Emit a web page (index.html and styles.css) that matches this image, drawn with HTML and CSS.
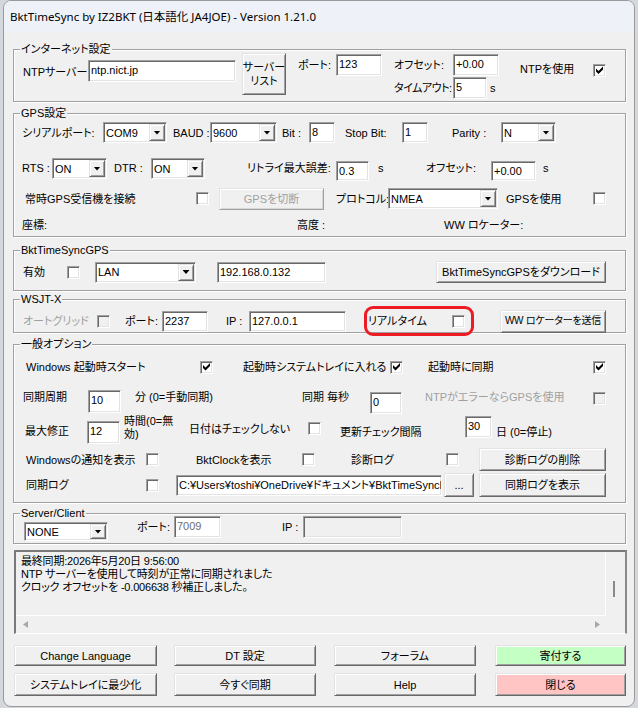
FILE: index.html
```html
<!DOCTYPE html>
<html lang="ja">
<head>
<meta charset="UTF-8">
<title>BktTimeSync</title>
<link rel="stylesheet" href="styles.css">
</head>
<body>
<div class="win">
	<div class="caption">BktTimeSync by IZ2BKT (日本語化 JA4JOE) - Version 1.21.0</div>
	<div class="client">

		<fieldset class="grp g-inet">
			<legend>インターネット設定</legend>
			<div class="inet">
				<span class="lbl ntp-lbl">NTPサーバー</span>
				<div class="tb ntp-tb">ntp.nict.jp</div>
				<div class="btn list-btn"><span>サーバー<br>リスト</span></div>
				<span class="lbl port-lbl">ポート:</span>
				<div class="tb port-tb">123</div>
				<div class="inet-col">
					<div class="inet-line"><span class="lbl off-lbl">オフセット:</span><div class="tb off-tb">+0.00</div></div>
					<div class="inet-line"><span class="lbl off-lbl tight">タイムアウト:</span><div class="tb to-tb">5</div><span class="lbl unit">s</span></div>
				</div>
				<span class="lbl use-lbl">NTPを使用</span>
				<span class="cb on use-cb"></span>
			</div>
		</fieldset>

		<fieldset class="grp g-gps">
			<legend>GPS設定</legend>
			<div class="row gps1">
				<span class="lbl">シリアルポート:</span>
				<div class="cmb w64"><span>COM9</span><i class="dd"></i></div>
				<span class="lbl">BAUD :</span>
				<div class="cmb w67"><span>9600</span><i class="dd"></i></div>
				<span class="lbl">Bit :</span>
				<div class="tb w26">8</div>
				<span class="lbl">Stop Bit:</span>
				<div class="tb w26">1</div>
				<span class="lbl">Parity :</span>
				<div class="cmb w55"><span>N</span><i class="dd"></i></div>
			</div>
			<div class="row gps2">
				<span class="lbl">RTS :</span>
				<div class="cmb w55"><span>ON</span><i class="dd"></i></div>
				<span class="lbl">DTR :</span>
				<div class="cmb w54"><span>ON</span><i class="dd"></i></div>
				<span class="lbl">リトライ最大誤差:</span>
				<div class="tb w33">0.3</div>
				<span class="lbl">s</span>
				<span class="lbl">オフセット:</span>
				<div class="tb w45">+0.00</div>
				<span class="lbl">s</span>
			</div>
			<div class="row gps3">
				<span class="lbl">常時GPS受信機を接続</span>
				<span class="cb"></span>
				<div class="btn dis w105">GPSを切断</div>
				<span class="lbl">プロトコル:</span>
				<div class="cmb w110"><span>NMEA</span><i class="dd"></i></div>
				<span class="lbl">GPSを使用</span>
				<span class="cb"></span>
			</div>
			<div class="row gps4">
				<span class="lbl">座標:</span>
				<span class="lbl">高度 :</span>
				<span class="lbl">WW ロケーター:</span>
			</div>
		</fieldset>

		<fieldset class="grp g-bkt">
			<legend>BktTimeSyncGPS</legend>
			<div class="row bkt">
				<span class="lbl">有効</span>
				<span class="cb"></span>
				<div class="cmb w101"><span>LAN</span><i class="dd"></i></div>
				<div class="tb w109">192.168.0.132</div>
				<div class="btn w170">BktTimeSyncGPSをダウンロード</div>
			</div>
		</fieldset>

		<fieldset class="grp g-wsjt">
			<legend>WSJT-X</legend>
			<div class="row wsjt">
				<span class="lbl dis">オートグリッド</span>
				<span class="cb dis"></span>
				<span class="lbl">ポート:</span>
				<div class="tb w46">2237</div>
				<span class="lbl">IP :</span>
				<div class="tb w97">127.0.0.1</div>
				<div class="rt">
					<span class="lbl">リアルタイム</span>
					<span class="cb"></span>
				</div>
				<div class="btn w106 small">WW ロケーターを送信</div>
			</div>
		</fieldset>

		<fieldset class="grp g-opt">
			<legend>一般オプション</legend>
			<div class="row opt1">
				<span class="lbl">Windows 起動時スタート</span>
				<span class="cb on"></span>
				<span class="lbl">起動時システムトレイに入れる</span>
				<span class="cb on"></span>
				<span class="lbl">起動時に同期</span>
				<span class="cb on"></span>
			</div>
			<div class="row opt2">
				<span class="lbl">同期周期</span>
				<div class="tb w33">10</div>
				<span class="lbl">分 (0=手動同期)</span>
				<span class="lbl">同期 毎秒</span>
				<div class="tb w32">0</div>
				<span class="lbl dis">NTPがエラーならGPSを使用</span>
				<span class="cb dis"></span>
			</div>
			<div class="row opt3">
				<span class="lbl o3-max">最大修正</span>
				<div class="tb w33 o3-h">12</div>
				<span class="lbl o3-hour">時間(0=無<br>効)</span>
				<span class="lbl o3-date">日付はチェックしない</span>
				<span class="cb o3-cb"></span>
				<span class="lbl o3-upd">更新チェック間隔</span>
				<div class="tb w27 o3-day">30</div>
				<span class="lbl o3-upd">日 (0=停止)</span>
			</div>
			<div class="row opt4">
				<span class="lbl">Windowsの通知を表示</span>
				<span class="cb"></span>
				<span class="lbl">BktClockを表示</span>
				<span class="cb"></span>
				<span class="lbl">診断ログ</span>
				<span class="cb"></span>
				<div class="btn w127">診断ログの削除</div>
			</div>
			<div class="row opt5">
				<span class="lbl">同期ログ</span>
				<span class="cb"></span>
				<div class="tb w266">C:¥Users¥toshi¥OneDrive¥ドキュメント¥BktTimeSyncL</div>
				<div class="btn w30">...</div>
				<div class="btn w127">同期ログを表示</div>
			</div>
		</fieldset>

		<fieldset class="grp g-srv">
			<legend>Server/Client</legend>
			<div class="row srv">
				<div class="cmb w84"><span>NONE</span><i class="dd"></i></div>
				<span class="lbl">ポート:</span>
				<div class="tb w47 gray">7009</div>
				<span class="lbl">IP :</span>
				<div class="tb w99 ro"></div>
			</div>
		</fieldset>

		<div class="log">
			<div class="log-text">最終同期:2026年5月20日 9:56:00<br>NTP サーバーを使用して時刻が正常に同期されました<br>クロック オフセットを -0.006638 秒補正しました。</div>
			<div class="vbar"><i></i></div>
			<div class="hbar"><i class="al"></i><i class="ar"></i></div>
		</div>

		<div class="foot">
			<div class="btn c1">Change Language</div>
			<div class="btn">DT 設定</div>
			<div class="btn">フォーラム</div>
			<div class="btn c4 green">寄付する</div>
			<div class="btn c1">システムトレイに最少化</div>
			<div class="btn">今すぐ同期</div>
			<div class="btn">Help</div>
			<div class="btn c4 red">閉じる</div>
		</div>

	</div>
</div>
</body>
</html>
```

FILE: styles.css
```css
*{margin:0;padding:0;box-sizing:border-box;}
body{background:#d4d7dc;font-family:"Liberation Sans","Noto Sans CJK JP",sans-serif;font-size:11px;line-height:14px;color:#000;font-feature-settings:"palt";}

/* window frame */
.win{width:632px;height:707px;margin-left:3px;background:#f0f0f0;border:1px solid #9a9a9a;border-radius:8px;overflow:hidden;}
.caption{height:31px;line-height:31px;padding-left:6px;background:#eef2f8;font-family:"Noto Sans","Noto Sans CJK JP",sans-serif;font-size:11.5px;font-feature-settings:normal;}
.client{padding:10px 8px 0 9px;}

/* group boxes */
.grp{border:1px solid #a0a0a0;box-shadow:inset 1px 1px #fff,1px 1px #fff;min-width:0;}
.grp legend{margin-left:6px;padding:0 1px;background:#f0f0f0;line-height:14px;}
.g-inet{height:60px;}
.g-gps{height:131px;margin-top:4px;}
.g-bkt{height:48px;margin-top:6px;}
.g-wsjt{height:41px;margin-top:1px;}
.g-opt{height:166px;margin-top:4px;}
.g-srv{height:38px;margin-top:3px;}

/* controls */
.lbl{white-space:nowrap;}
.tight{letter-spacing:-0.5px;}
.small{font-size:10px;letter-spacing:-0.2px;}
.dis{color:#a0a0a0;}
.tb{height:21px;background:#fff;border:1px solid;border-color:#a0a0a0 #fff #fff #a0a0a0;box-shadow:inset 1px 1px #696969,inset -1px -1px #e3e3e3;padding:2px 0 0 2px;white-space:nowrap;overflow:hidden;}
.tb.gray{color:#6d6d6d;}
.tb.ro{background:#f0f0f0;}
.cmb{height:21px;display:flex;align-items:center;justify-content:space-between;background:#fff;border:1px solid;border-color:#a0a0a0 #fff #fff #a0a0a0;box-shadow:inset 1px 1px #696969,inset -1px -1px #e3e3e3;padding:1px 1px 1px 2px;white-space:nowrap;}
.dd{align-self:stretch;width:16px;display:flex;align-items:center;justify-content:center;background:#f0f0f0;border:1px solid;border-color:#e3e3e3 #696969 #696969 #e3e3e3;box-shadow:inset 1px 1px #fff,inset -1px -1px #a0a0a0;}
.dd::after{content:"";width:7px;height:4px;background:#000;clip-path:polygon(0 0,100% 0,50% 100%);}
.cb{position:relative;width:13px;height:13px;background:#fff;border:1px solid;border-color:#a0a0a0 #fff #fff #a0a0a0;box-shadow:inset 1px 1px #696969,inset -1px -1px #e3e3e3;}
.cb.dis{background:#f0f0f0;}
.cb.on::after{content:"";position:absolute;left:2px;top:1px;width:7px;height:8px;background:#000;clip-path:polygon(0 2.5px,2.5px 5px,7px .5px,7px 3.5px,2.5px 8px,0 5.5px);}
.btn{height:22px;display:flex;align-items:center;justify-content:center;text-align:center;background:#f0f0f0;border:1px solid;border-color:#e3e3e3 #696969 #696969 #e3e3e3;box-shadow:inset 1px 1px #fff,inset -1px -1px #a0a0a0;white-space:nowrap;overflow:hidden;}
.btn.dis{border-color:#e3e3e3 #a0a0a0 #a0a0a0 #e3e3e3;box-shadow:inset 1px 1px #fff,inset -1px -1px #d6d6d6;}
.btn.green{background:#c4ffc4;}
.btn.red{background:#ffc4c4;}

.w26{width:26px;} .w27{width:27px;} .w30{width:30px;} .w32{width:32px;} .w33{width:33px;}
.w45{width:45px;} .w46{width:46px;} .w47{width:47px;} .w54{width:54px;} .w55{width:55px;}
.w64{width:64px;} .w67{width:67px;} .w84{width:84px;} .w97{width:97px;} .w99{width:99px;}
.w101{width:101px;} .w105{width:105px;} .w106{width:106px;} .w109{width:109px;} .w110{width:110px;}
.w127{width:127px;} .w170{width:170px;} .w266{width:266px;}

/* rows: each column starts where its control starts */
.row{display:grid;align-items:center;justify-items:start;}

.inet{display:flex;align-items:flex-start;padding-left:9px;margin-top:-2px;}
.inet .tb{height:22px;}
.ntp-lbl{width:65px;margin-top:11px;}
.ntp-tb{width:148px;margin:6px 6px 0 0;}
.list-btn{width:44px;height:42px;margin:-1px 12px 0 0;}
.port-lbl{width:38px;margin-top:4px;}
.port-tb{width:46px;margin-right:12px;}
.inet-col{width:126px;display:flex;flex-direction:column;gap:1px;}
.inet-line{display:flex;align-items:center;height:22px;}
.off-lbl{width:59px;}
.off-tb{width:46px;}
.to-tb{width:34px;}
.unit{margin-left:3px;}
.use-lbl{width:73px;margin-top:8px;}
.use-cb{margin-top:10px;}

.gps1{grid-template-columns:81px 70px 37px 72px 27px 36px 57px 50px 49px auto;padding-left:8px;margin-top:2px;height:21px;}
.gps2{grid-template-columns:30px 62px 37px 96px 89px 42px 48px 65px 52px auto;padding-left:8px;margin-top:15px;height:22px;align-items:start;}
.gps2 > .lbl,.gps2 > .tb{margin-top:3px;}
.gps2 .tb{height:20px;}
.gps3{grid-template-columns:171px 23px 117px 52px 118px 87px auto;padding-left:11px;margin-top:7px;height:23px;}
.gps4{grid-template-columns:275px 147px auto;padding-left:8px;margin-top:8px;height:14px;}

.bkt{grid-template-columns:44px 28px 122px 219px auto;padding-left:9px;margin-top:4px;height:22px;}

.wsjt{grid-template-columns:74px 28px 37px 64px 23px 115px 136px auto;padding-left:9px;height:23px;}
.wsjt .btn{height:23px;}
.rt{display:flex;align-items:center;width:110px;height:30px;border:3px solid #ed1c24;border-radius:9px;padding-left:1px;}
.rt .lbl{width:84px;}

.opt1{grid-template-columns:174px 43px 147px 38px 165px auto;padding-left:12px;margin-top:9px;height:14px;}
.opt2{grid-template-columns:65px 47px 167px 68px 55px 168px auto;padding-left:9px;margin-top:16px;height:23px;align-items:start;}
.opt2 .w33{height:23px;}
.opt2 .w32{height:22px;margin-top:2px;}
.opt2 .cb{margin-top:2px;}
.opt3{grid-template-columns:62px 37px 65px 119px 32px 125px 31px auto;padding-left:11px;margin-top:2px;height:29px;align-items:start;}
.o3-max{margin-top:9px;}
.o3-h{height:23px;margin-top:6px;}
.o3-hour{line-height:13px;}
.o3-date,.o3-cb{margin-top:7px;}
.o3-upd{margin-top:10px;}
.o3-day{height:22px;margin-top:1px;}
.opt4{grid-template-columns:120px 50px 106px 49px 95px 33px auto;padding-left:12px;margin-top:4px;height:23px;}
.opt4 .btn{height:23px;}
.opt5{grid-template-columns:120px 30px 268px 35px auto;padding-left:12px;margin-top:2px;height:24px;}
.opt5 .btn{height:24px;}

.srv{grid-template-columns:113px 37px 108px 21px auto;padding-left:10px;margin-top:-4px;height:24px;align-items:start;}
.srv .cmb{height:19px;margin-top:6px;}
.srv .lbl{margin-top:4px;}
.srv .tb{height:22px;}

/* status log */
.log{display:grid;grid-template-columns:590px 19px;grid-template-rows:64px 17px;width:613px;height:84px;margin:6px 0 0 1px;border-style:solid;border-width:2px 2px 1px 2px;border-color:#7a7a7a #8a8a8a #fff #7a7a7a;}
.log-text{border-right:1px solid #fff;border-bottom:1px solid #fff;padding:3px 0 0 5px;line-height:13px;letter-spacing:-0.2px;overflow:hidden;white-space:nowrap;}
.vbar{padding:29px 0 0 7px;}
.vbar i{display:block;width:2px;height:16px;background:#8a8a8a;}
.hbar{display:flex;align-items:center;justify-content:space-between;padding:0 6px 0 7px;}
.hbar i{width:5px;height:7px;background:#a8a8a8;}
.al{clip-path:polygon(100% 0,100% 100%,0 50%);}
.ar{clip-path:polygon(0 0,0 100%,100% 50%);}

/* bottom buttons */
.foot{display:grid;grid-template-columns:160px 160px 161px 131px;grid-template-rows:21px 23px;row-gap:7px;margin:11px 0 0 1px;}
.foot .btn{width:142px;height:auto;}
.foot .c1{width:143px;}
.foot .c4{width:131px;}
```
